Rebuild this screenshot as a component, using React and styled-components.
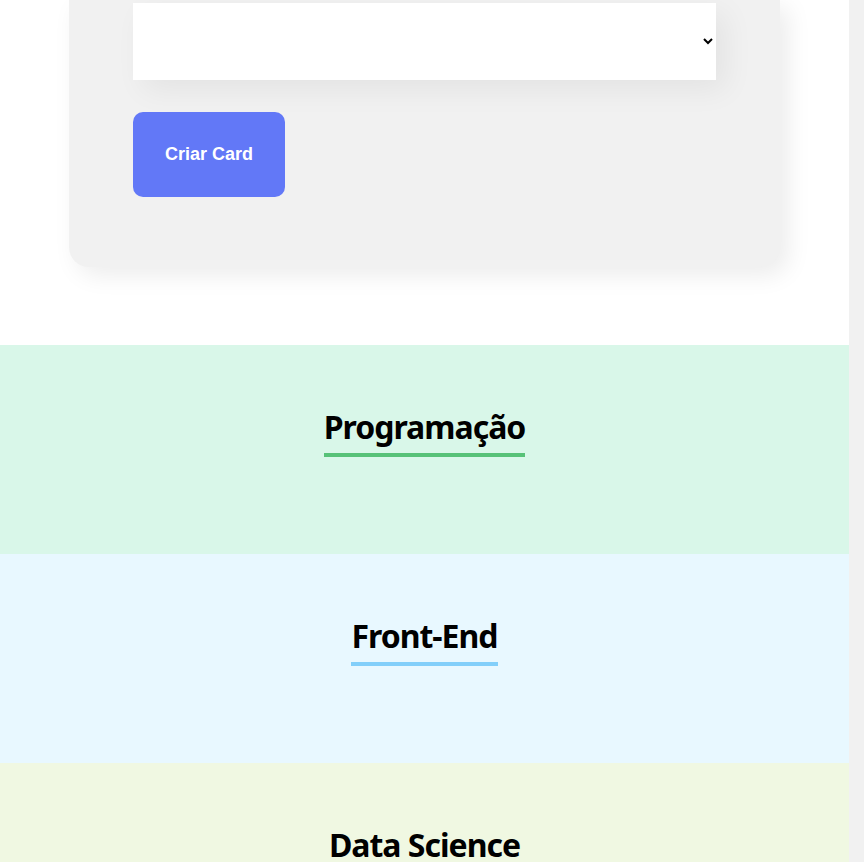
import React from 'react'
import styled, { createGlobalStyle } from 'styled-components'

const GlobalStyle = createGlobalStyle`
    * {
        box-sizing: border-box;
    }
    /* faixa da barra de rolagem do navegador (15px à direita) */
    html {
        background: #F1F1F1;
    }
    body {
        margin: 0 15px 0 0;
        background: #FFFFFF;
        font-family: "Noto Sans", "Open Sans", sans-serif;
    }
`

const times = [
    { nome: 'Programação', primaria: '#57C278', secundaria: '#D9F7E9' },
    { nome: 'Front-End', primaria: '#82CFFA', secundaria: '#E8F8FF' },
    { nome: 'Data Science', primaria: '#A6D157', secundaria: '#F0F8E2' },
]

function App() {
    return (
        <>
            <GlobalStyle />
            <FormSection>
                <FormCard onSubmit={(e) => e.preventDefault()}>
                    <Select defaultValue="" aria-label="Time">
                        <option value=""></option>
                        {times.map(time => <option key={time.nome}>{time.nome}</option>)}
                    </Select>
                    <Button type="submit">Criar Card</Button>
                </FormCard>
            </FormSection>
            {times.map(time => (
                <Time key={time.nome} $bg={time.secundaria} $cor={time.primaria}>
                    <h3>{time.nome}</h3>
                </Time>
            ))}
        </>
    )
}

const FormSection = styled.section`
    padding: 0 0 78px;
`

const FormCard = styled.form`
    max-width: 711px;
    margin: 0 auto;
    padding: 3px 64px 70px;
    background: #F1F1F1;
    border-radius: 0 0 20px 20px;
    box-shadow: 8px 8px 24px rgba(0, 0, 0, 0.08);
`

const Select = styled.select`
    display: block;
    width: 100%;
    height: 77px;
    margin-bottom: 32px;
    padding: 0 0 0 24px;
    border: none;
    background: #FFFFFF;
    box-shadow: 10px 10px 30px rgba(0, 0, 0, 0.06);
    font-family: "Liberation Sans", Arial, sans-serif;
    font-size: 20px;
`

const Button = styled.button`
    display: block;
    border: none;
    border-radius: 10px;
    padding: 32px;
    background: #6278F7;
    color: #FFFFFF;
    font-family: "Liberation Sans", Arial, sans-serif;
    font-weight: 700;
    font-size: 18px;
    line-height: 21px;
    cursor: pointer;
`

const Time = styled.section`
    background: ${props => props.$bg};
    padding: 62px 0 97px;
    text-align: center;
    h3 {
        display: inline-block;
        margin: 0;
        padding-bottom: 6px;
        font-size: 32px;
        line-height: 40px;
        font-weight: 700;
        letter-spacing: -1px;
        color: #000000;
        border-bottom: 4px solid ${props => props.$cor};
    }
`

export default App
